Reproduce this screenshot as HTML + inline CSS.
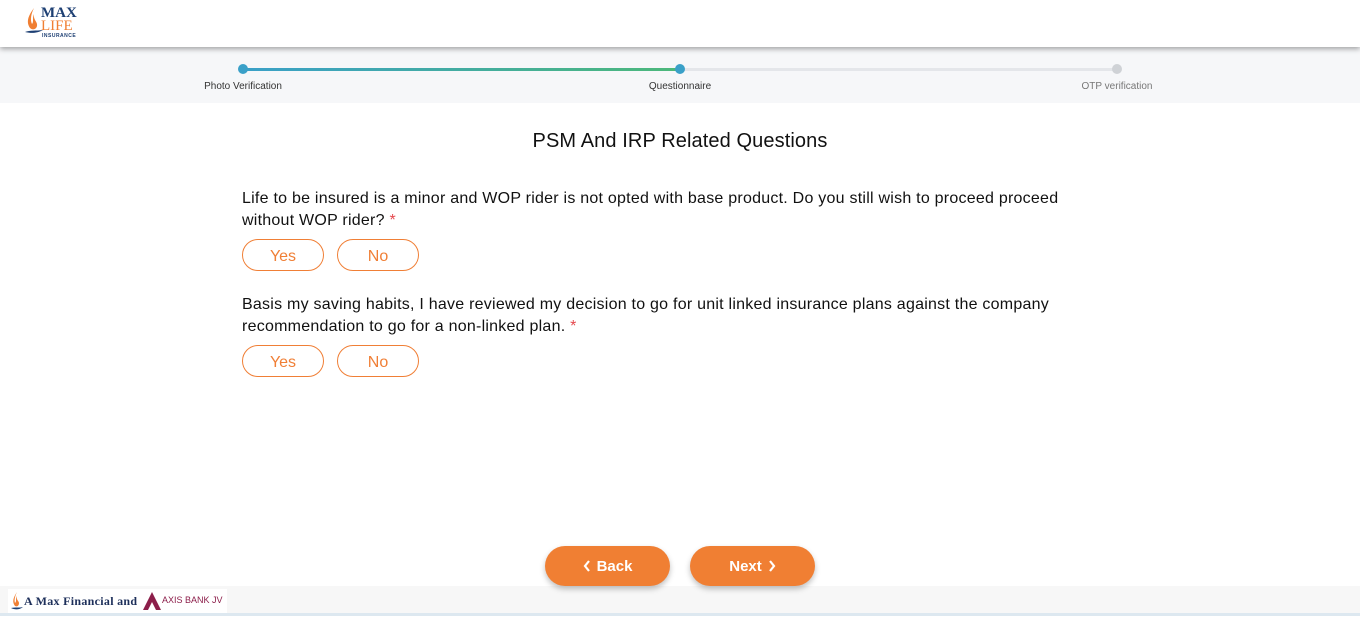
<!DOCTYPE html>
<html><head><meta charset="utf-8"><style>
*{margin:0;padding:0;box-sizing:border-box}
body{width:1360px;height:619px;position:relative;background:#fff;font-family:"Liberation Sans",sans-serif;overflow:hidden}
.hdr{position:absolute;left:0;top:0;width:1360px;height:47px;background:#fff;box-shadow:0 2px 5px rgba(0,0,0,.35);z-index:2}
.steps{position:absolute;left:0;top:47px;width:1360px;height:56px;background:#f6f7f9}
.line{position:absolute;top:68px;height:3px}
.dot{position:absolute;top:64px;width:10px;height:10px;border-radius:50%}
.lbl{position:absolute;top:81px;font-size:10px;color:#333;transform:translateX(-50%)}
h1{position:absolute;top:130px;width:100%;text-align:center;font-size:20px;font-weight:normal;color:#111;letter-spacing:.1px}
.q{position:absolute;left:242px;width:840px;font-size:16px;line-height:22px;color:#111;letter-spacing:.24px}
.q span{color:#e5484d}
.b{position:absolute;width:82px;height:32px;border:1px solid #f07f36;border-radius:16px;color:#f07f36;font-size:16px;text-align:center;line-height:31px;padding-top:1px}
.btn{position:absolute;top:546px;width:125px;height:40px;border-radius:20px;background:#f07f33;color:#fff;font-weight:bold;font-size:15px;text-align:center;line-height:41px;box-shadow:0 3px 6px rgba(0,0,0,.25)}
.foot{position:absolute;left:0;top:586px;width:1360px;height:30px;background:#f7f7f7;border-bottom:3px solid #dde8f0}
</style></head><body>
<div class="hdr">
<svg style="position:absolute;left:24px;top:6px" width="20" height="30" viewBox="0 0 20 30"><path d="M10 2C4 10 2 16 6 22C8 24 12 24 13 20C14 16 9 14 10 8C8 12 10 16 8 18C6 14 7 8 10 2Z" fill="#f07f33"/><path d="M1 26C6 24 12 25 19 24C12 28 6 27 1 26Z" fill="#1d3f73"/></svg>
<div style="position:absolute;left:41px;top:7px;font-family:'Liberation Serif',serif;font-weight:bold;font-size:15px;line-height:13px;color:#1d3f73">MAX</div>
<div style="position:absolute;left:41px;top:20px;font-family:'Liberation Serif',serif;font-size:15px;line-height:13px;color:#f07f33">LIFE</div>
<div style="position:absolute;left:42px;top:33px;font-size:5px;font-weight:bold;color:#1d3f73;letter-spacing:.5px">INSURANCE</div>
</div>
<div class="steps"></div>
<div class="line" style="left:243px;width:437px;background:linear-gradient(90deg,#3aa0c8,#4cb87a)"></div>
<div class="line" style="left:680px;width:437px;background:#e4e6ea"></div>
<div class="dot" style="left:238px;background:#3aa0c8"></div>
<div class="dot" style="left:675px;background:#3aa0c8"></div>
<div class="dot" style="left:1112px;background:#cfd2d6"></div>
<div class="lbl" style="left:243px">Photo Verification</div>
<div class="lbl" style="left:680px">Questionnaire</div>
<div class="lbl" style="left:1117px;color:#777">OTP verification</div>
<h1>PSM And IRP Related Questions</h1>
<div class="q" style="top:188px">Life to be insured is a minor and WOP rider is not opted with base product. Do you still wish to proceed proceed without WOP rider? <span>*</span></div>
<div class="b" style="left:242px;top:239px">Yes</div><div class="b" style="left:337px;top:239px">No</div>
<div class="q" style="top:294px">Basis my saving habits, I have reviewed my decision to go for unit linked insurance plans against the company recommendation to go for a non-linked plan. <span>*</span></div>
<div class="b" style="left:242px;top:345px">Yes</div><div class="b" style="left:337px;top:345px">No</div>
<div class="foot"></div>
<div style="position:absolute;left:8px;top:589px;width:219px;height:24px;background:#fff"></div>
<svg style="position:absolute;left:11px;top:591px" width="12" height="20" viewBox="0 0 12 20"><path d="M6 1C2 7 1 11 4 15C6 16 8 15 8 12C8 10 5 9 6 5C4 8 6 10 4 12C3 9 4 5 6 1Z" fill="#f07f33"/><path d="M0 17C4 16 8 17 12 16C8 19 4 19 0 17Z" fill="#1d3f73"/></svg>
<div style="position:absolute;left:24px;top:594px;font-family:'Liberation Serif',serif;font-weight:bold;font-size:12px;color:#1d2f5a;letter-spacing:.3px">A Max Financial and</div>
<svg style="position:absolute;left:142px;top:591px" width="20" height="20" viewBox="0 0 20 20"><path d="M10 1L1 19H6L10 11L14 19H19Z" fill="#8c1e4a"/></svg>
<div style="position:absolute;left:162px;top:595px;font-size:9px;color:#8c1e4a">AXIS BANK JV</div>
<div class="btn" style="left:545px"><svg width="8" height="12" viewBox="0 0 8 12" style="vertical-align:-1px;margin-right:6px"><path d="M6 1L2 6L6 11" stroke="#fff" stroke-width="2.2" fill="none"/></svg>Back</div>
<div class="btn" style="left:690px">Next<svg width="8" height="12" viewBox="0 0 8 12" style="vertical-align:-1px;margin-left:6px"><path d="M2 1L6 6L2 11" stroke="#fff" stroke-width="2.2" fill="none"/></svg></div>
</body></html>
